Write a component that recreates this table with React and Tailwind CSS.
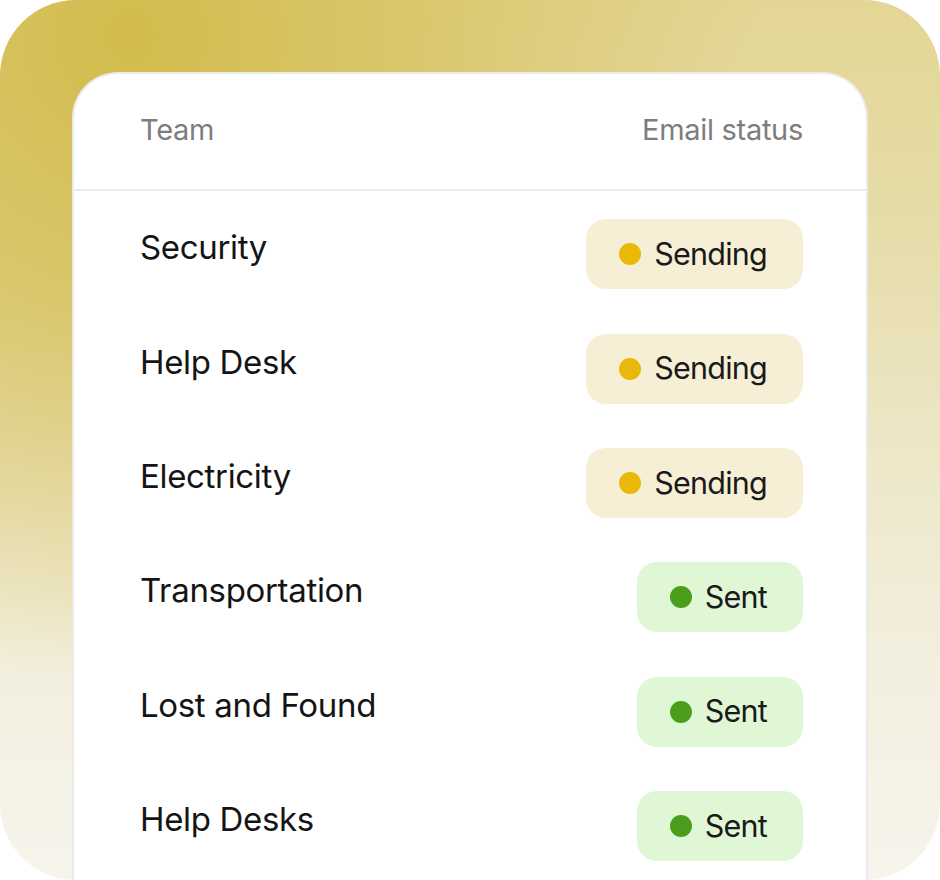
import React from "react";

const rows = [
  { team: "Security", status: "Sending" },
  { team: "Help Desk", status: "Sending" },
  { team: "Electricity", status: "Sending" },
  { team: "Transportation", status: "Sent" },
  { team: "Lost and Found", status: "Sent" },
  { team: "Help Desks", status: "Sent" },
];

const StatusBadge = ({ status }) => {
  const sending = status === "Sending";
  return (
    <div
      className={`flex h-[70px] items-center gap-[13px] rounded-[20px] pl-[33px] pr-[36px] ${
        sending ? "bg-[#f7efd5]" : "bg-[#e0f7d6]"
      }`}
    >
      <span
        className={`h-[22px] w-[22px] rounded-full ${
          sending ? "bg-[#e9b90a]" : "bg-[#4a9e1c]"
        }`}
      />
      <span className="text-[30.5px] leading-none tracking-[-0.025em] text-[#1a1a1a]">
        {status}
      </span>
    </div>
  );
};

export default function App() {
  return (
    <div className="h-[880px] w-[940px] bg-white font-['Inter',sans-serif]">
      <div className="flex h-full w-full flex-col overflow-hidden rounded-[76px] bg-[radial-gradient(ellipse_at_14%_4%,#d3bc4c_0%,#d8c567_20%,rgba(226,214,150,0)_55%),linear-gradient(180deg,#e3d695_0%,#e6dca8_25%,#ede6c6_50%,#f3efdf_75%,#f6f4ec_100%)] px-[72px] pt-[72px]">
        <div className="flex flex-1 flex-col rounded-t-[46px] border-2 border-b-0 border-[#ebebeb] bg-white">
          {/* Header */}
          <div className="flex h-[117px] items-center justify-between border-b-2 border-[#ebebeb] pb-[4px] pl-[66px] pr-[63px] text-[29px] tracking-[-0.01em] text-[#7d7d7d]">
            <span>Team</span>
            <span>Email status</span>
          </div>

          {/* Rows */}
          <div className="flex flex-col pt-[6px] pl-[66px] pr-[63px]">
            {rows.map((row) => (
              <div
                key={row.team}
                className="flex items-start justify-between py-[22.2px]"
              >
                <span className="mt-[8px] text-[33px] leading-[40px] tracking-[-0.01em] text-[#141414]">
                  {row.team}
                </span>
                <StatusBadge status={row.status} />
              </div>
            ))}
          </div>
        </div>
      </div>
    </div>
  );
}
